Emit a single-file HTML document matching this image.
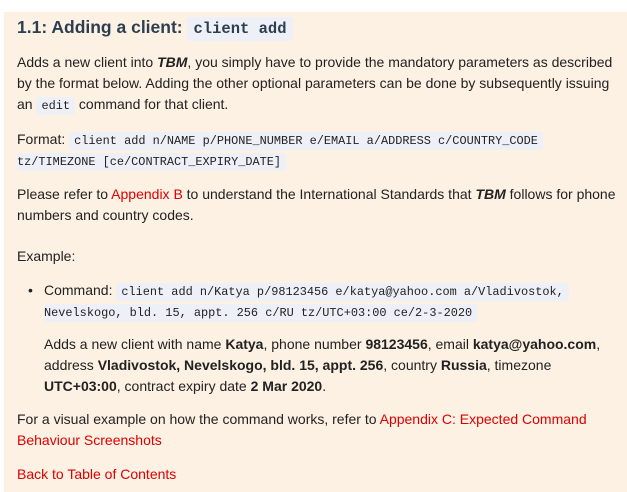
<!DOCTYPE html>
<html><head><style>
body{margin:0;background:#fff;width:627px;height:487px;overflow:hidden;font-family:"Liberation Sans",sans-serif;color:#222;}
.box{position:absolute;left:4px;top:12px;width:623px;height:480px;background:#fdf1e4;}
.l{position:absolute;left:17px;font-size:14px;line-height:21px;white-space:nowrap;}
code{font-family:"Liberation Mono",monospace;font-size:11.9px;background:#eef0f8;padding:2px 5px;border-radius:3px;color:#222;}
h1{position:absolute;left:17px;top:13px;margin:0;font-size:17.5px;line-height:28px;color:#2c3e50;font-weight:bold;}
h1 code{font-size:15.5px;padding:3px 6px;font-weight:bold;color:#2c3e50;}
a{color:#d00;text-decoration:none;}
.ind{left:44px;}
</style></head><body>
<div class="box"></div>
<h1>1.1: Adding a client: <code>client add</code></h1>
<div class="l" style="top:52px">Adds a new client into <b><i>TBM</i></b>, you simply have to provide the mandatory parameters as described</div>
<div class="l" style="top:73px">by the format below. Adding the other optional parameters can be done by subsequently issuing</div>
<div class="l" style="top:94px">an <code>edit</code> command for that client.</div>
<div class="l" style="top:129px">Format: <code>client add n/NAME p/PHONE_NUMBER e/EMAIL a/ADDRESS c/COUNTRY_CODE</code></div>
<div class="l" style="top:150px"><code style="padding-left:0">tz/TIMEZONE [ce/CONTRACT_EXPIRY_DATE]</code></div>
<div class="l" style="top:184px">Please refer to <a>Appendix B</a> to understand the International Standards that <b><i>TBM</i></b> follows for phone</div>
<div class="l" style="top:205px">numbers and country codes.</div>
<div class="l" style="top:246px">Example:</div>
<div class="l" style="top:280px;left:28px">•</div>
<div class="l ind" style="top:280px">Command: <code>client add n/Katya p/98123456 e/katya@yahoo.com a/Vladivostok,</code></div>
<div class="l ind" style="top:301px"><code style="padding-left:0">Nevelskogo, bld. 15, appt. 256 c/RU tz/UTC+03:00 ce/2-3-2020</code></div>
<div class="l ind" style="top:334px">Adds a new client with name <b>Katya</b>, phone number <b>98123456</b>, email <b>katya@yahoo.com</b>,</div>
<div class="l ind" style="top:355px">address <b>Vladivostok, Nevelskogo, bld. 15, appt. 256</b>, country <b>Russia</b>, timezone</div>
<div class="l ind" style="top:376px"><b>UTC+03:00</b>, contract expiry date <b>2 Mar 2020</b>.</div>
<div class="l" style="top:409px">For a visual example on how the command works, refer to <a>Appendix C: Expected Command</a></div>
<div class="l" style="top:430px"><a>Behaviour Screenshots</a></div>
<div class="l" style="top:464px"><a>Back to Table of Contents</a></div>
</body></html>
